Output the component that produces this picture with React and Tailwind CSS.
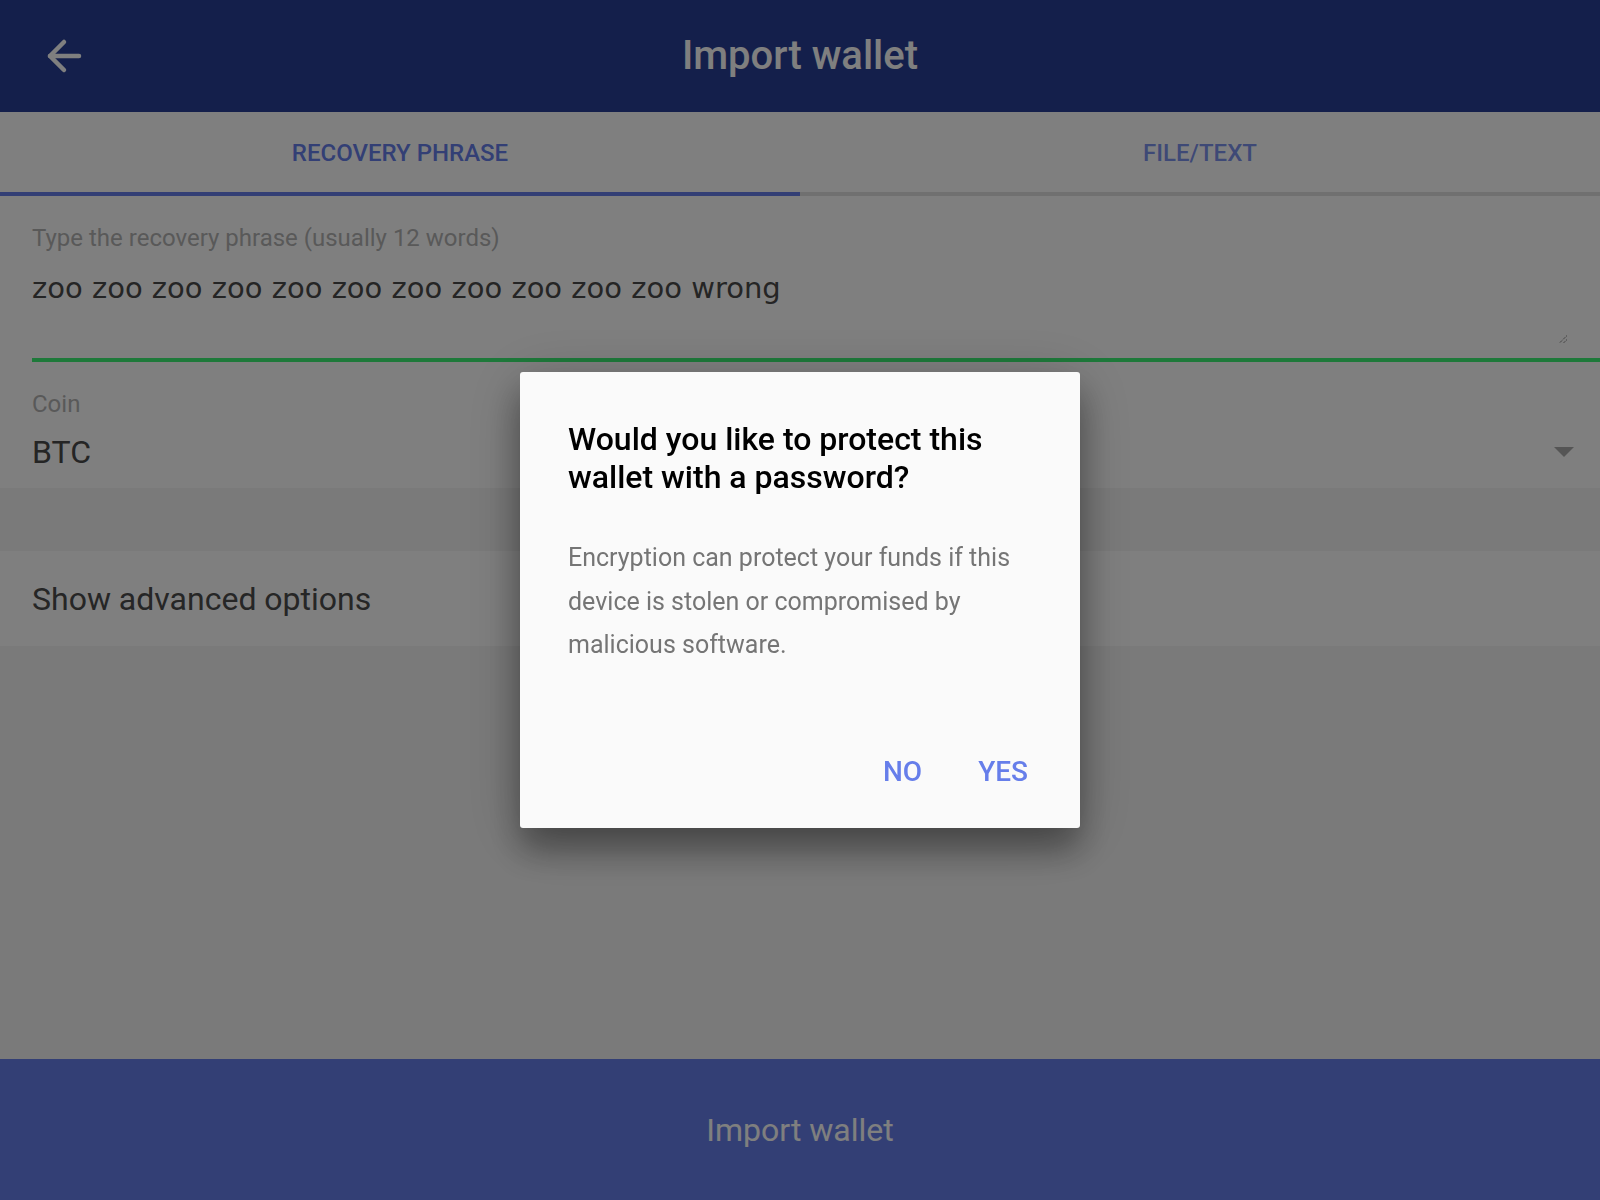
import React from "react";

const BackArrow = () => (
  <svg width="36" height="36" viewBox="0 0 36 36" fill="none" stroke="white" strokeWidth="4.5" strokeLinecap="round" strokeLinejoin="round">
    <path d="M33 18H4" />
    <path d="M18 4L4 18L18 32" />
  </svg>
);

const ResizeHandle = () => (
  <svg width="9" height="9" viewBox="0 0 9 9" className="absolute right-[32px] bottom-[14px]" stroke="#555" strokeWidth="1" strokeDasharray="1 1">
    <line x1="8" y1="0.5" x2="0.5" y2="8" />
    <line x1="8" y1="4.5" x2="4.5" y2="8" />
  </svg>
);

const Caret = () => (
  <svg width="20" height="10" viewBox="0 0 20 10">
    <path d="M0 0H20L10 10Z" fill="#aaaaaa" />
  </svg>
);

function PasswordDialog() {
  return (
    <div className="fixed inset-0 bg-black/50 flex items-center justify-center">
      <div className="w-[560px] h-[456px] bg-[#fafafa] rounded-[3px] flex flex-col px-[48px] pt-[48px] shadow-[0_22px_34px_rgba(0,0,0,0.35),0_8px_60px_rgba(0,0,0,0.2)]">
        <h2 className="text-[32px] leading-[38px] font-medium text-black">
          Would you like to protect this wallet with a password?
        </h2>
        <p className="mt-[40px] text-[25px] leading-[43.5px] text-[#757575]">
          Encryption can protect your funds if this device is stolen or compromised by malicious software.
        </p>
        <div className="mt-auto pb-[36px] mr-[4px] flex justify-end gap-[56px]">
          <button className="text-[28px] leading-[40px] font-medium text-[#667eea] uppercase">No</button>
          <button className="text-[28px] leading-[40px] font-medium text-[#667eea] uppercase">Yes</button>
        </div>
      </div>
    </div>
  );
}

export default function App() {
  return (
    <div className="h-screen w-full flex flex-col bg-white font-['Roboto',sans-serif] overflow-hidden">
      <header className="h-[112px] shrink-0 bg-[#283e96] grid grid-cols-[1fr_auto_1fr] items-center">
        <div className="pl-[46px]">
          <BackArrow />
        </div>
        <h1 className="text-[40px] leading-none font-medium text-white">Import wallet</h1>
        <div />
      </header>

      <div className="h-[84px] shrink-0 flex bg-white">
        <div className="flex-1 flex items-center justify-center pt-[1px] border-b-4 border-[#667eea] text-[#667eea] text-[24px] font-medium uppercase">
          Recovery phrase
        </div>
        <div className="flex-1 flex items-center justify-center pt-[1px] border-b-4 border-[#e0e0e0] text-[#667eea]/85 text-[24px] font-medium uppercase">
          File/Text
        </div>
      </div>

      <section className="shrink-0 pl-[32px] pt-[28px]">
        <label className="block text-[24px] leading-[28px] text-[#b3b3b3]">
          Type the recovery phrase (usually 12 words)
        </label>
        <div className="relative mt-[19px] h-[91px] border-b-4 border-[#3cf275]">
          <p className="font-['DejaVu_Sans',sans-serif] text-[29px] leading-[34px] text-[#4a4a4a]">
            zoo zoo zoo zoo zoo zoo zoo zoo zoo zoo zoo wrong
          </p>
          <ResizeHandle />
        </div>
      </section>

      <section className="h-[126px] shrink-0 pl-[32px] pr-[26px] pt-[28px]">
        <div className="text-[24px] leading-[28px] text-[#b3b3b3]">Coin</div>
        <div className="mt-[15px] flex items-center justify-between">
          <span className="text-[32px] leading-[38px] text-[#4a4a4a]">BTC</span>
          <Caret />
        </div>
      </section>

      <div className="h-[63px] shrink-0 bg-[#f5f5f5]" />

      <div className="h-[95px] shrink-0 flex items-center pl-[32px] text-[32px] text-[#4c4c4c]">
        Show advanced options
      </div>

      <div className="flex-1 bg-[#f5f5f5]" />

      <footer className="h-[141px] shrink-0 bg-[#667eea] flex items-center justify-center text-[32px] text-white">
        Import wallet
      </footer>

      <PasswordDialog />
    </div>
  );
}
